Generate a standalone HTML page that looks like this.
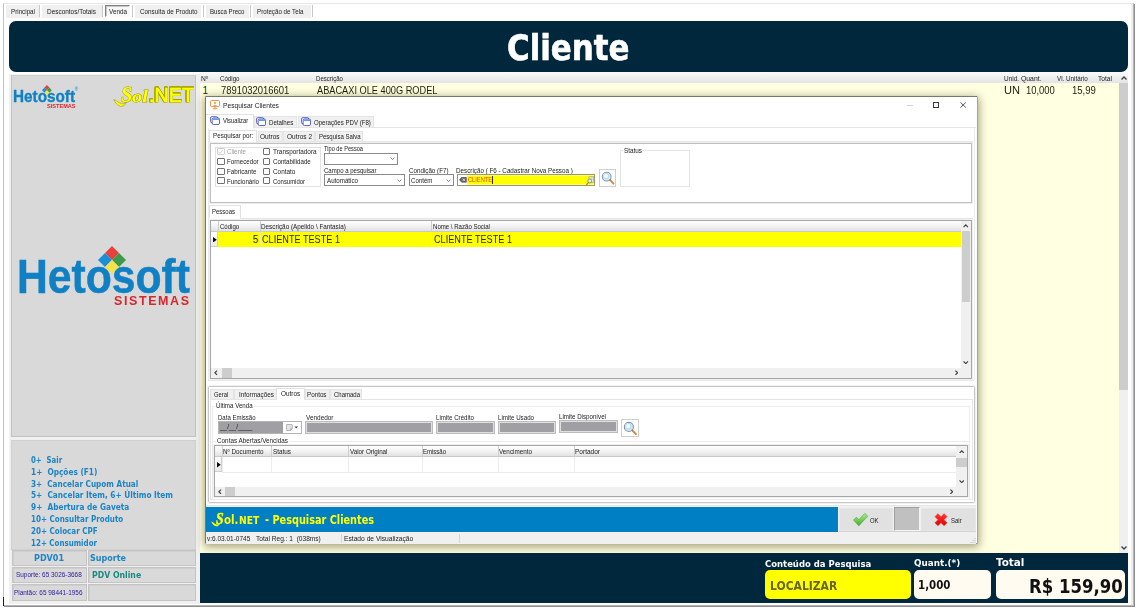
<!DOCTYPE html>
<html lang="pt-BR">
<head>
<meta charset="utf-8">
<title>Cliente</title>
<style>
html,body{margin:0;padding:0;background:#fff;}
body{width:1139px;height:611px;position:relative;overflow:hidden;font-family:"Liberation Sans","DejaVu Sans",sans-serif;font-size:6.5px;color:#1a1a1a;}
.a{position:absolute;box-sizing:border-box;}
.t{position:absolute;white-space:nowrap;line-height:10px;height:10px;transform-origin:0 50%;}
.tab{position:absolute;box-sizing:border-box;background:#f0f0f0;top:5px;height:13.4px;}
.sep{position:absolute;top:5px;height:12px;width:1px;background:#c9c9c9;}
.menu .t{font-family:"DejaVu Sans","Liberation Sans",sans-serif;font-weight:bold;color:#1b84c6;font-size:8.2px;white-space:pre;}
.cell{position:absolute;box-sizing:border-box;border:1px solid #c4c4c4;background:#d9d9d9;box-shadow:inset 1px 1px 0 #cfcfcf;}
.cb{position:absolute;box-sizing:border-box;width:7.2px;height:7.2px;border:1px solid #707070;border-radius:1px;background:#fff;}
.combo{position:absolute;box-sizing:border-box;border:1px solid #8a8a8a;background:#fff;}
.gf{position:absolute;box-sizing:border-box;border:1px solid #bcbcbc;background:#a0a0a4;box-shadow:inset 0 0 0 1px #e0e0e0;}
.gh{position:absolute;box-sizing:border-box;background:linear-gradient(#ffffff,#f4f4f4 45%,#e2e2e2);border-bottom:1px solid #c9c9c9;}
.lrow .t{font-size:10px;color:#1e1e10;}
.grow .t{font-size:10px;color:#2a2a00;}
.sol .t{color:#ffff00;-webkit-text-stroke:0.9px #9a9a00;paint-order:stroke fill;}
.bar .t{color:#ffff00;font-weight:bold;font-family:'DejaVu Sans','Liberation Sans',sans-serif;height:20px;line-height:20px;}
.vl{position:absolute;width:1px;background:#d8d8d8;}
.hl{position:absolute;height:1px;background:#d8d8d8;}
</style>
</head>
<body>
<!-- main window frame -->
<div class="a" id="frame" style="left:3px;top:3px;width:1131px;height:603px;border:1px solid #b4b4b4;border-top-color:#e6e6e6;border-left-color:#c2c2c2;background:#fff;box-shadow:1px 1px 0 #909090;"></div>

<div class="a" style="left:3px;top:597px;width:1px;height:9px;background:#101820;"></div>
<div class="a" style="left:1131px;top:4px;width:2px;height:601px;background:#eeeeee;"></div>
<!-- top tabs -->
<div id="toptabs">
<div class="tab" style="left:6px;width:33.5px;"></div><div class="t" style="transform:scaleX(0.962);left:10.5px;top:6.5px;">Principal</div>
<div class="sep" style="left:39.4px;"></div>
<div class="tab" style="left:42px;width:59.5px;"></div><div class="t" style="transform:scaleX(0.990);left:47px;top:6.5px;">Descontos/Totais</div>
<div class="sep" style="left:102px;"></div>
<div class="a" style="left:105px;top:5px;width:24.6px;height:12.2px;background:#f7f7f7;border:1px solid #808080;border-right-color:#fafafa;border-bottom-color:#fafafa;box-shadow:inset 1px 1px 0 #c8c8c8;"></div><div class="t" style="transform:scaleX(0.976);left:109px;top:7px;">Venda</div>
<div class="sep" style="left:132px;"></div>
<div class="tab" style="left:135px;width:65.5px;"></div><div class="t" style="transform:scaleX(0.970);left:139.5px;top:6.5px;">Consulta de Produto</div>
<div class="sep" style="left:203px;"></div>
<div class="tab" style="left:205.5px;width:43.5px;"></div><div class="t" style="transform:scaleX(0.936);left:209.5px;top:6.5px;">Busca Preco</div>
<div class="sep" style="left:250px;"></div>
<div class="tab" style="left:252.5px;width:58.5px;"></div><div class="t" style="transform:scaleX(0.955);left:257px;top:6.5px;">Proteção de Tela</div>
<div class="sep" style="left:312px;"></div>
</div>

<!-- header banner -->
<div class="a" id="banner" style="left:9px;top:21px;width:1118.5px;height:50.5px;background:#00273c;border-radius:7px;"></div>
<div class="t" id="title" style="transform:scaleX(0.964);left:507.2px;top:23px;height:50px;line-height:50px;font-family:'DejaVu Sans Condensed','DejaVu Sans','Liberation Sans',sans-serif;font-weight:bold;font-size:35.6px;color:#fff;-webkit-text-stroke:0.6px #fff;">Cliente</div>

<!-- left background -->
<div class="a" style="left:9.2px;top:74px;width:190.8px;height:529.6px;background:#f0f0f0;"></div>
<!-- logo panel -->
<div class="a" id="logopanel" style="left:10.8px;top:75px;width:185.6px;height:361.8px;background:#d9d9d9;border:1px solid #c2c2c2;border-top-color:#d0d0d0;"></div>
<!-- menu panel -->
<div class="a" id="menupanel" style="left:10.8px;top:439.5px;width:185.6px;height:110px;background:#d9d9d9;border:1px solid #d0d0d0;"></div>


<!-- small logo -->
<div class="t" id="slogo" style="transform:scaleX(0.899);left:13.3px;top:86.5px;height:20px;line-height:20px;font-weight:bold;font-size:17px;color:#1080c4;-webkit-text-stroke:0.35px #1080c4;">Hetosoft</div>
<svg class="a" style="left:42.4px;top:84.8px;" width="9.8" height="10.4" viewBox="0 0 28 28" preserveAspectRatio="none"><path d="M14 0l7 7-7 7-7-7z" fill="#e8403c"/><path d="M7 7l7 7-7 7-7-7z" fill="#1a8fd8"/><path d="M21 7l7 7-7 7-7-7z" fill="#3c9a4a"/><path d="M14 14l7 7-7 7-7-7z" fill="#f3e24a"/></svg>
<div class="t" style="transform:scaleX(0.932);left:46.6px;top:101.4px;font-weight:bold;font-size:6px;color:#d8262c;">SISTEMAS</div>
<div class="t" style="left:74.6px;top:87.5px;font-size:4.6px;font-weight:bold;color:#3c98d0;line-height:4px;height:4px;">®</div>
<!-- Sol.NET -->
<div class="sol">
<svg class="a" style="left:113px;top:96px;" width="14" height="12" viewBox="0 0 14 12"><path d="M0.800 3.600C3.200 4.200 5.500 6.800 8.200 7.600C10.200 8.200 12 7.600 13 6.200C12.600 8.800 10.400 10.600 7.600 10.300C4.600 10 2.200 6.600 0.800 3.600z" fill="#ffff00" stroke="#8a8a00" stroke-width="0.500"/></svg>
<div class="t" style="transform:scaleX(0.899);left:120.5px;top:83.3px;height:24px;line-height:24px;font-family:'Liberation Serif','DejaVu Serif',serif;font-style:italic;font-weight:bold;font-size:23px;">S</div>
<div class="t" style="transform:scaleX(1.209);left:132px;top:85.2px;height:24px;line-height:24px;font-family:'Liberation Serif','DejaVu Serif',serif;font-style:italic;font-weight:bold;font-size:17px;">ol</div>
<div class="t" style="transform:scaleX(0.954);left:149.2px;top:83px;height:24px;line-height:24px;font-size:20.800px;-webkit-text-stroke:0.6px #ffff00;filter:drop-shadow(0.3px 0 0 #a4a400) drop-shadow(-0.3px 0 0 #a4a400) drop-shadow(0 0.3px 0 #a4a400) drop-shadow(0 -0.3px 0 #a4a400);">.NET</div>
</div>
<!-- big logo -->
<div class="t" id="blogo" style="transform:scaleX(0.898);left:17.2px;top:251.8px;height:50px;line-height:50px;font-weight:bold;font-size:47.5px;color:#1080c4;-webkit-text-stroke:0.5px #1080c4;">Hetosoft</div>
<svg class="a" style="left:97.5px;top:246px;" width="28" height="28" viewBox="0 0 28 28"><path d="M14 0l7 7-7 7-7-7z" fill="#e8403c"/><path d="M7 7l7 7-7 7-7-7z" fill="#1a8fd8"/><path d="M21 7l7 7-7 7-7-7z" fill="#3c9a4a"/><path d="M14 14l7 7-7 7-7-7z" fill="#f3e24a"/></svg>
<div class="t" id="bsis" style="transform:scaleX(0.999);left:113.5px;top:295.5px;font-weight:bold;font-size:12.5px;color:#d8262c;letter-spacing:1.6px;">SISTEMAS</div>
<!-- menu -->
<div class="menu">
<div class="t" style="transform:scaleX(0.851);left:30.6px;top:455.1px;">0+  Sair</div>
<div class="t" style="transform:scaleX(0.901);left:30.6px;top:466.9px;">1+  Opções (F1)</div>
<div class="t" style="transform:scaleX(0.891);left:30.6px;top:478.6px;">3+  Cancelar Cupom Atual</div>
<div class="t" style="transform:scaleX(0.899);left:30.6px;top:490.4px;">5+  Cancelar Item, 6+ Último Item</div>
<div class="t" style="transform:scaleX(0.901);left:30.6px;top:502.2px;">9+  Abertura de Gaveta</div>
<div class="t" style="transform:scaleX(0.876);left:30.6px;top:513.9px;">10+ Consultar Produto</div>
<div class="t" style="transform:scaleX(0.877);left:30.6px;top:525.7px;">20+ Colocar CPF</div>
<div class="t" style="transform:scaleX(0.867);left:30.6px;top:537.5px;">12+ Consumidor</div>
</div>
<!-- bottom-left cells -->
<div class="cell" style="left:11.5px;top:549.5px;width:75px;height:16.5px;"></div>
<div class="cell" style="left:88px;top:549.5px;width:107.5px;height:16.5px;"></div>
<div class="cell" style="left:11.5px;top:567px;width:75px;height:16px;"></div>
<div class="cell" style="left:88px;top:567px;width:107.5px;height:16px;"></div>
<div class="cell" style="left:11.5px;top:584px;width:75px;height:17.3px;"></div>
<div class="cell" style="left:88px;top:584px;width:107.5px;height:17.3px;"></div>
<div class="t" id="pdv01" style="transform:scaleX(0.878);left:34px;top:552.5px;font-family:'DejaVu Sans','Liberation Sans',sans-serif;font-weight:bold;font-size:9.2px;color:#1b84c6;">PDV01</div>
<div class="t" id="sup" style="transform:scaleX(0.874);left:90px;top:552.5px;font-family:'DejaVu Sans','Liberation Sans',sans-serif;font-weight:bold;font-size:9.2px;color:#1b84c6;">Suporte</div>
<div class="t" id="sup2" style="transform:scaleX(1.006);left:15.8px;top:570px;font-size:6.4px;color:#2a1a9a;">Suporte: 65 3026-3668</div>
<div class="t" id="pdvon" style="transform:scaleX(0.905);left:92.2px;top:570px;font-family:'DejaVu Sans','Liberation Sans',sans-serif;font-weight:bold;font-size:8.6px;color:#1a8a80;">PDV Online</div>
<div class="t" id="plant" style="transform:scaleX(1.004);left:14px;top:587.5px;font-size:6.4px;color:#2a1a9a;">Plantão: 65 98441-1956</div>

<!-- list area -->
<div class="a" id="list" style="left:200px;top:83px;width:919px;height:470px;background:#ffffe1;"></div>
<div class="gh" id="listhead" style="left:200px;top:72px;width:928px;height:11px;border-bottom:none;background:linear-gradient(#fbfbfb,#e4e4e4);"></div>
<!-- list scrollbar -->
<div class="a" style="left:1119px;top:83px;width:9px;height:470px;background:#f0f0f0;"></div>
<div class="a" style="left:1119px;top:83px;width:9px;height:306.8px;background:#cdcdcd;"></div>


<!-- list header labels -->
<div class="t" style="transform:scaleX(1.064);left:201px;top:73.5px;font-size:6.3px;">Nº</div>
<div class="t" style="transform:scaleX(0.977);left:219.5px;top:73.5px;font-size:6.3px;">Código</div>
<div class="t" style="transform:scaleX(0.964);left:316.3px;top:73.5px;font-size:6.3px;">Descrição</div>
<div class="t" style="transform:scaleX(1.020);left:1004px;top:73.5px;font-size:6.3px;">Unid.</div>
<div class="t" style="transform:scaleX(1.084);left:1020.8px;top:73.5px;font-size:6.3px;">Quant.</div>
<div class="t" style="transform:scaleX(0.994);left:1057.3px;top:73.5px;font-size:6.3px;">Vl. Unitário</div>
<div class="t" style="transform:scaleX(1.052);left:1098px;top:73.5px;font-size:6.3px;">Total</div>
<svg class="a" style="left:1120.5px;top:76px;" width="6" height="4" viewBox="0 0 6 4"><path d="M0.5 3.5L3 1l2.5 2.5" fill="none" stroke="#404040" stroke-width="1.35"/></svg>
<svg class="a" style="left:1120.5px;top:546px;" width="6" height="4" viewBox="0 0 6 4"><path d="M0.5 0.5L3 3l2.5-2.5" fill="none" stroke="#404040" stroke-width="1.35"/></svg>
<!-- list row -->
<div class="lrow">
<div class="t" style="left:202.6px;top:85.8px;">1</div>
<div class="t" style="transform:scaleX(0.945);left:220.7px;top:85.8px;">7891032016601</div>
<div class="t" style="transform:scaleX(0.922);left:317px;top:85.8px;">ABACAXI OLE 400G RODEL</div>
<div class="t" style="transform:scaleX(1.107);left:1004px;top:85.8px;">UN</div>
<div class="t" style="transform:scaleX(0.941);left:1025.8px;top:85.8px;">10,000</div>
<div class="t" style="transform:scaleX(0.955);left:1071.5px;top:85.8px;">15,99</div>
</div>


<!-- ================= dialog ================= -->
<div class="a" id="dlg" style="left:205.3px;top:96.3px;width:772.6px;height:448px;background:#fff;border:1px solid #77776a;border-right-color:#a4a494;border-bottom-color:#a4a494;border-radius:1.5px;box-shadow:0 2px 8px 1px rgba(70,70,30,0.5);"></div>
<!-- title bar -->
<svg class="a" style="left:210px;top:100px;" width="10" height="9.5" viewBox="0 0 20 19"><rect x="1" y="1" width="18" height="12" rx="2" fill="#fff" stroke="#f0873a" stroke-width="1.8"/><circle cx="10" cy="6" r="2.2" fill="#f5a020"/><path d="M6 11.5 Q10 7 14 11.5z" fill="#f0873a"/><path d="M10 13v3M5.5 17.5h9" stroke="#f0873a" stroke-width="2" fill="none"/></svg>
<div class="t" style="transform:scaleX(0.861);left:222.8px;top:100.7px;font-size:7.8px;color:#222;">Pesquisar Clientes</div>
<div class="a" style="left:907px;top:105px;width:6px;height:1px;background:#d0d0d0;"></div>
<div class="a" style="left:933px;top:102px;width:6.4px;height:6px;border:1px solid #3a3a3a;"></div>
<svg class="a" style="left:960px;top:102px;" width="6.3" height="6" viewBox="0 0 7 7" preserveAspectRatio="none"><path d="M0.5 0.5l6 6M6.5 0.5l-6 6" stroke="#333" stroke-width="0.9" fill="none"/></svg>
<!-- tab strip 1 -->
<div class="a" style="left:206.3px;top:127px;width:769.5px;height:1px;background:#e6e6e6;"></div>
<div class="a" style="left:205.8px;top:114px;width:48px;height:13.5px;background:#fff;border:1px solid #e2e2e2;border-bottom:none;border-left:none;"></div>
<div class="a" style="left:254px;top:116px;width:43px;height:11px;background:#f0f0f0;border:1px solid #e4e4e4;border-bottom:none;"></div>
<div class="a" style="left:297.5px;top:116px;width:76px;height:11px;background:#f0f0f0;border:1px solid #e4e4e4;border-bottom:none;"></div>
<svg class="a" style="left:210.2px;top:116.1px;" width="10" height="9" viewBox="0 0 20 18"><rect x="1" y="1.2" width="14.5" height="12.5" rx="2.8" fill="#eef0ff" stroke="#4444b8" stroke-width="1.5"/><rect x="4.3" y="4" width="14.700" height="13" rx="2.600" fill="#fff" stroke="#3d3db5" stroke-width="1.600"/><rect x="5.300" y="5" width="12.700" height="3.200" rx="0.800" fill="#5aa0ea"/></svg>
<svg class="a" style="left:256px;top:117px;" width="10" height="9" viewBox="0 0 20 18"><rect x="1" y="1.2" width="14.5" height="12.5" rx="2.8" fill="#eef0ff" stroke="#4444b8" stroke-width="1.5"/><rect x="4.3" y="4" width="14.700" height="13" rx="2.600" fill="#fff" stroke="#3d3db5" stroke-width="1.600"/><rect x="5.300" y="5" width="12.700" height="3.200" rx="0.800" fill="#5aa0ea"/></svg>
<svg class="a" style="left:301px;top:117px;" width="10" height="9" viewBox="0 0 20 18"><rect x="1" y="1.2" width="14.5" height="12.5" rx="2.8" fill="#eef0ff" stroke="#4444b8" stroke-width="1.5"/><rect x="4.3" y="4" width="14.700" height="13" rx="2.600" fill="#fff" stroke="#3d3db5" stroke-width="1.600"/><rect x="5.300" y="5" width="12.700" height="3.200" rx="0.800" fill="#5aa0ea"/></svg>
<div class="t" style="transform:scaleX(0.898);left:222.9px;top:115.9px;">Visualizar</div>
<div class="t" style="transform:scaleX(0.947);left:269px;top:117.6px;">Detalhes</div>
<div class="t" style="transform:scaleX(0.936);left:313.7px;top:117.6px;">Operações PDV (F8)</div>
<!-- page 1 pane -->
<div class="a" style="left:208.3px;top:128px;width:1px;height:252px;background:#ececec;"></div>
<div class="a" style="left:208.3px;top:379.6px;width:766px;height:1px;background:#e8e8e8;"></div>
<div class="a" style="left:974px;top:128px;width:1px;height:252px;background:#ececec;"></div>
<div class="a" style="left:208px;top:386.4px;width:767px;height:116.5px;border:1px solid #c6c6c6;border-radius:1.5px;box-shadow:0 0 0 1px #f1f1f1;"></div>
<div class="a" style="left:206.3px;top:504.6px;width:770px;height:1px;background:#e6e6e6;"></div>
<!-- tab strip 2 -->
<div class="a" style="left:208.6px;top:129.5px;width:48.8px;height:13px;background:#fff;border:1px solid #e0e0e0;border-bottom:none;"></div>
<div class="a" style="left:257.6px;top:131.2px;width:25.6px;height:10.3px;background:#f0f0f0;border:1px solid #e4e4e4;border-bottom:none;"></div>
<div class="a" style="left:283.3px;top:131.2px;width:31.4px;height:10.3px;background:#f0f0f0;border:1px solid #e4e4e4;border-bottom:none;"></div>
<div class="a" style="left:314.8px;top:131.2px;width:47.8px;height:10.3px;background:#f0f0f0;border:1px solid #e4e4e4;border-bottom:none;"></div>
<div class="a" style="left:257.4px;top:141.3px;width:716px;height:1px;background:#e6e6e6;"></div>
<div class="t" style="transform:scaleX(0.964);left:212.6px;top:130.8px;">Pesquisar por:</div>
<div class="t" style="transform:scaleX(1.004);left:260px;top:131.9px;">Outros</div>
<div class="t" style="transform:scaleX(1.003);left:286.7px;top:131.9px;">Outros 2</div>
<div class="t" style="transform:scaleX(0.926);left:318.5px;top:131.9px;">Pesquisa Salva</div>
<!-- pane 2 -->
<div class="a" id="pane2" style="left:210.2px;top:143px;width:762px;height:59.5px;background:#fff;border:1px solid #c0c0c0;box-shadow:0 0 0 1px #ededed;"></div>
<!-- checkbox group -->
<div class="a" style="left:214.8px;top:146.6px;width:106px;height:40.6px;border:1px solid #e2e2e2;"></div>
<div class="cb" style="left:217.4px;top:148.0px;border-color:#cfcfcf;"></div><div class="t" style="transform:scaleX(0.939);left:226.7px;top:147.3px;color:#9a9a9a;">Cliente</div>
<div class="cb" style="left:263.3px;top:148.0px;"></div><div class="t" style="transform:scaleX(0.986);left:272.7px;top:147.3px;">Transportadora</div>
<div class="cb" style="left:217.4px;top:157.7px;"></div><div class="t" style="transform:scaleX(0.953);left:226.7px;top:157.0px;">Fornecedor</div>
<div class="cb" style="left:263.3px;top:157.7px;"></div><div class="t" style="transform:scaleX(0.951);left:272.7px;top:157.0px;">Contabilidade</div>
<div class="cb" style="left:217.4px;top:167.5px;"></div><div class="t" style="transform:scaleX(0.957);left:226.7px;top:166.8px;">Fabricante</div>
<div class="cb" style="left:263.3px;top:167.5px;"></div><div class="t" style="transform:scaleX(0.979);left:272.7px;top:166.8px;">Contato</div>
<div class="cb" style="left:217.4px;top:177.3px;"></div><div class="t" style="transform:scaleX(0.942);left:226.7px;top:176.6px;">Funcionário</div>
<div class="cb" style="left:263.3px;top:177.3px;"></div><div class="t" style="transform:scaleX(0.913);left:272.7px;top:176.6px;">Consumidor</div>
<svg class="a" style="left:218.4px;top:149px;" width="5.4" height="5.4" viewBox="0 0 6 6"><path d="M0.8 3.2l1.6 1.6L5.4 1.2" stroke="#c4c4c4" stroke-width="0.9" fill="none"/></svg>


<!-- pane2 fields -->
<div class="t" style="transform:scaleX(0.868);left:324.3px;top:144.2px;">Tipo de Pessoa</div>
<div class="combo" style="left:324px;top:152.5px;width:73.5px;height:12px;"></div>
<svg class="a" style="left:389.5px;top:157.2px;" width="5" height="3.2" viewBox="0 0 10 6"><path d="M1 1l4 4 4-4" fill="none" stroke="#444" stroke-width="1.3"/></svg>
<div class="t" style="transform:scaleX(0.931);left:324.3px;top:165.8px;">Campo a pesquisar</div>
<div class="combo" style="left:324px;top:174.2px;width:81px;height:12.2px;"></div>
<div class="t" style="transform:scaleX(0.953);left:326.5px;top:175.6px;">Automático</div>
<svg class="a" style="left:397px;top:178.8px;" width="5" height="3.2" viewBox="0 0 10 6"><path d="M1 1l4 4 4-4" fill="none" stroke="#444" stroke-width="1.3"/></svg>
<div class="t" style="transform:scaleX(0.959);left:408.8px;top:165.8px;">Condição (F7)</div>
<div class="combo" style="left:409px;top:174.2px;width:44.5px;height:12.2px;"></div>
<div class="t" style="transform:scaleX(0.944);left:411.3px;top:175.6px;">Contém</div>
<svg class="a" style="left:445.5px;top:178.8px;" width="5" height="3.2" viewBox="0 0 10 6"><path d="M1 1l4 4 4-4" fill="none" stroke="#444" stroke-width="1.3"/></svg>
<div class="t" style="transform:scaleX(0.965);left:456.3px;top:165.8px;">Descrição ( F6 - Cadastrar Nova Pessoa )</div>
<div class="a" style="left:456.8px;top:174.2px;width:138.5px;height:11.8px;background:#ffff00;border:1px solid #9a9a70;box-shadow:inset 0 0 0 0.5px #ffffc0;"></div>
<div class="a" style="left:457.8px;top:175.2px;width:9.6px;height:9.8px;background:#fff;"></div>
<svg class="a" style="left:458.8px;top:177.3px;" width="7.8" height="5.6" viewBox="0 0 15 11"><path d="M5 0.7H14.3V10.3H5L0.8 5.5z" fill="#6a6a6a" stroke="#333" stroke-width="1"/><path d="M7.3 3.3l4.2 4.4M11.5 3.3l-4.2 4.4" stroke="#fff" stroke-width="1.5"/></svg>
<div class="t" style="transform:scaleX(0.874);left:467.5px;top:175.4px;color:#e6451e;">CLIENTE</div>
<div class="a" style="left:492.4px;top:176.3px;width:1px;height:7.5px;background:#333;"></div>
<svg class="a" style="left:585.5px;top:175.5px;" width="8.5" height="9.5" viewBox="0 0 17 19"><rect x="6" y="1.5" width="9.5" height="11" fill="#f4f4d8" stroke="#8a8a8a" stroke-width="1"/><path d="M7.5 4h6M7.5 6.5h6" stroke="#9a9ac8" stroke-width="1"/><circle cx="7.5" cy="10" r="4" fill="#dfefff" fill-opacity="0.8" stroke="#6f7f9a" stroke-width="1.5"/><path d="M4.8 13l-3.6 4.6" stroke="#b07030" stroke-width="2.2" stroke-linecap="round"/></svg>
<div class="a" style="left:598.8px;top:168.8px;width:17.5px;height:18px;background:#fff;border:1px solid #cfcfcf;"></div>
<svg class="a" style="left:600.5px;top:170.5px;" width="14" height="14" viewBox="0 0 32 32"><circle cx="13" cy="13" r="10" fill="#d4eaf8" stroke="#8496a8" stroke-width="2.4"/><circle cx="11.5" cy="11.5" r="6" fill="#f4fbff" stroke="#bcdcf0" stroke-width="2.5"/><path d="M20.5 20.5l8 8.5" stroke="#d8862e" stroke-width="4.2" stroke-linecap="round"/><path d="M19.5 19.5l2.5 2.5" stroke="#8a8a8a" stroke-width="3"/></svg>
<div class="a" style="left:620px;top:150px;width:70px;height:36.5px;border:1px solid #e4e4e4;"></div>
<div class="t" style="transform:scaleX(0.979);left:623.3px;top:145.6px;background:#fff;padding:0 1px;">Status</div>


<!-- Pessoas tab + grid 1 -->
<div class="a" style="left:208.6px;top:205.2px;width:32px;height:13px;background:#fff;border:1px solid #e2e2e2;border-bottom:none;"></div>
<div class="a" style="left:240.4px;top:217.5px;width:733px;height:1px;background:#e6e6e6;"></div>
<div class="t" style="transform:scaleX(0.922);left:212.2px;top:206.7px;">Pessoas</div>
<div class="a" id="grid1" style="left:210.2px;top:220.2px;width:762px;height:158.5px;background:#fff;border:1px solid #a6a6a6;box-shadow:0 0 0 1px #efefef;"></div>
<div class="gh" style="left:211.2px;top:221.2px;width:749.8px;height:10.6px;"></div>
<div class="vl" style="left:218px;top:221.2px;height:10.6px;background:#cfcfcf;"></div>
<div class="vl" style="left:259.8px;top:221.2px;height:10.6px;background:#cfcfcf;"></div>
<div class="vl" style="left:431px;top:221.2px;height:10.6px;background:#cfcfcf;"></div>
<div class="t" style="transform:scaleX(0.932);left:219.5px;top:221.6px;">Código</div>
<div class="t" style="transform:scaleX(0.974);left:261px;top:221.6px;">Descrição (Apelido \ Fantasia)</div>
<div class="t" style="transform:scaleX(0.933);left:432.5px;top:221.6px;">Nome \ Razão Social</div>
<div class="a" style="left:211.2px;top:231.6px;width:7px;height:15px;background:linear-gradient(#fff,#e9e9e9);border-right:1px solid #cfcfcf;border-bottom:1px solid #cfcfcf;"></div>
<div class="a" style="left:218.3px;top:231.6px;width:742.7px;height:15px;background:#ffff00;"></div>
<div class="vl" style="left:259.8px;top:231.6px;height:14.6px;background:#f4f490;"></div>
<div class="vl" style="left:431px;top:231.6px;height:14.6px;background:#f4f490;"></div>
<svg class="a" style="left:213.2px;top:236.6px;" width="3.8" height="5.6" viewBox="0 0 4 6"><path d="M0 0L4 3L0 6z" fill="#000"/></svg>
<div class="grow">
<div class="t" style="left:252.8px;top:235px;">5</div>
<div class="t" style="transform:scaleX(0.913);left:262.2px;top:235px;">CLIENTE TESTE 1</div>
<div class="t" style="transform:scaleX(0.913);left:433.8px;top:235px;">CLIENTE TESTE 1</div>
</div>
<!-- grid1 scrollbars -->
<div class="a" style="left:961px;top:221.2px;width:10.2px;height:146.5px;background:#f0f0f0;"></div>
<div class="a" style="left:962px;top:231.3px;width:8.2px;height:71px;background:#cdcdcd;"></div>
<svg class="a" style="left:963.2px;top:224.4px;" width="5.5" height="3.5" viewBox="0 0 6 4"><path d="M0.5 3.5L3 1l2.5 2.5" fill="none" stroke="#404040" stroke-width="1.35"/></svg>
<svg class="a" style="left:963.2px;top:360.8px;" width="5.5" height="3.5" viewBox="0 0 6 4"><path d="M0.5 0.5L3 3l2.5-2.5" fill="none" stroke="#404040" stroke-width="1.35"/></svg>
<div class="a" style="left:211.2px;top:367.7px;width:760px;height:10px;background:#f0f0f0;"></div>
<div class="a" style="left:221.5px;top:367.7px;width:10px;height:10px;background:#cdcdcd;"></div>
<svg class="a" style="left:214px;top:370px;" width="3.5" height="5.5" viewBox="0 0 4 6"><path d="M3.5 0.5L1 3l2.5 2.5" fill="none" stroke="#404040" stroke-width="1.35"/></svg>
<svg class="a" style="left:954.5px;top:370px;" width="3.5" height="5.5" viewBox="0 0 4 6"><path d="M0.5 0.5L3 3L0.5 5.5" fill="none" stroke="#404040" stroke-width="1.35"/></svg>


<!-- bottom tabs -->
<div class="a" style="left:210.3px;top:389.2px;width:23.8px;height:10.5px;background:#f0f0f0;border:1px solid #e4e4e4;border-bottom:none;"></div>
<div class="a" style="left:234px;top:389.2px;width:42.5px;height:10.5px;background:#f0f0f0;border:1px solid #e4e4e4;border-bottom:none;"></div>
<div class="a" style="left:305px;top:389.2px;width:25px;height:10.5px;background:#f0f0f0;border:1px solid #e4e4e4;border-bottom:none;"></div>
<div class="a" style="left:330px;top:389.2px;width:32.3px;height:10.5px;background:#f0f0f0;border:1px solid #e4e4e4;border-bottom:none;"></div>
<div class="a" style="left:276.4px;top:387.6px;width:28.6px;height:12.8px;background:#fff;border:1px solid #e0e0e0;border-bottom:none;"></div>
<div class="t" style="transform:scaleX(0.899);left:213.7px;top:389.6px;">Geral</div>
<div class="t" style="transform:scaleX(0.975);left:238.5px;top:389.6px;">Informações</div>
<div class="t" style="transform:scaleX(0.984);left:281px;top:388.5px;">Outros</div>
<div class="t" style="transform:scaleX(0.963);left:307px;top:389.7px;">Pontos</div>
<div class="t" style="transform:scaleX(0.922);left:334px;top:389.7px;">Chamada</div>
<!-- pane 3 -->
<div class="a" id="pane3" style="left:210.2px;top:399.4px;width:762.4px;height:101px;border:1px solid #e4e4e4;"></div>
<div class="a" style="left:277.4px;top:399.4px;width:26.6px;height:1px;background:#fff;"></div>
<div class="a" style="left:211.8px;top:406px;width:758px;height:36px;border:1px solid #ececec;border-bottom:none;"></div>
<div class="t" style="transform:scaleX(0.949);left:214.9px;top:401.1px;background:#fff;padding:0 1px;">Última Venda</div>
<div class="a" style="left:211.8px;top:441px;width:758px;height:58.6px;border:1px solid #ebebeb;"></div>
<div class="t" style="transform:scaleX(0.977);left:216.1px;top:435.7px;background:#fff;padding:0 1px;">Contas Abertas/Vencidas</div>
<div class="t" style="transform:scaleX(0.927);left:217.7px;top:413.2px;">Data Emissão</div>
<div class="a" style="left:217.9px;top:421px;width:84.4px;height:13px;background:#fff;border:1px solid #b4b4b4;"></div>
<div class="a" style="left:218.9px;top:422px;width:64.3px;height:11px;background:#a0a0a4;"></div>
<div class="t" style="transform:scaleX(0.809);left:220.4px;top:422px;font-size:8px;color:#1a1a1a;">__/__/____</div>
<svg class="a" style="left:286px;top:424.2px;" width="12.5" height="7" viewBox="0 0 25 14"><path d="M2 1h9q1.500 0 1.500 1.500v7l-3.500 3.500h-7q-1.500 0-1.500-1.500v-9q0-1.500 1.500-1.500z" fill="#e4e4e8" stroke="#8c8c94" stroke-width="1.300"/><path d="M12.500 9.500h-3.500v3.500" fill="none" stroke="#8c8c94" stroke-width="1"/><path d="M17 5h7l-3.500 4z" fill="#1c3c80"/></svg>
<div class="t" style="transform:scaleX(0.988);left:305.5px;top:413.2px;">Vendedor</div>
<div class="gf" style="left:305.3px;top:421px;width:127.7px;height:13px;"></div>
<div class="t" style="transform:scaleX(0.947);left:435.8px;top:413.2px;">Limite Crédito</div>
<div class="gf" style="left:436px;top:421px;width:59px;height:13px;"></div>
<div class="t" style="transform:scaleX(0.949);left:497.7px;top:413.2px;">Limite Usado</div>
<div class="gf" style="left:497.7px;top:421px;width:58.6px;height:13px;"></div>
<div class="t" style="transform:scaleX(0.949);left:559px;top:412.2px;">Limite Disponível</div>
<div class="gf" style="left:559px;top:420px;width:59px;height:13px;"></div>
<div class="a" style="left:620.9px;top:419px;width:18px;height:17.6px;background:#fff;border:1px solid #cfcfcf;"></div>
<svg class="a" style="left:622.6px;top:420.6px;" width="14.5" height="14.5" viewBox="0 0 32 32"><circle cx="13" cy="13" r="10" fill="#d4eaf8" stroke="#8496a8" stroke-width="2.4"/><circle cx="11.5" cy="11.5" r="6" fill="#f4fbff" stroke="#bcdcf0" stroke-width="2.5"/><path d="M20.5 20.5l8 8.5" stroke="#d8862e" stroke-width="4.2" stroke-linecap="round"/><path d="M19.5 19.5l2.5 2.5" stroke="#8a8a8a" stroke-width="3"/></svg>
<!-- grid 2 -->
<div class="a" id="grid2" style="left:214px;top:445.3px;width:753.5px;height:52px;background:#fff;border:1px solid #a6a6a6;box-shadow:0 0 0 1px #f1f1f1;"></div>
<div class="gh" style="left:215px;top:446.3px;width:741px;height:11px;"></div>
<div class="t" style="transform:scaleX(0.964);left:222.9px;top:447px;">Nº Documento</div>
<div class="t" style="transform:scaleX(0.976);left:272.5px;top:446.8px;">Status</div>
<div class="t" style="transform:scaleX(0.964);left:349.5px;top:446.8px;">Valor Original</div>
<div class="t" style="transform:scaleX(0.922);left:423.2px;top:446.8px;">Emissão</div>
<div class="t" style="transform:scaleX(0.971);left:499.3px;top:446.8px;">Vencimento</div>
<div class="t" style="transform:scaleX(1.003);left:575.2px;top:446.8px;">Portador</div>
<div class="a" style="left:215px;top:457.3px;width:7px;height:15px;background:linear-gradient(#fff,#e9e9e9);border-right:1px solid #cfcfcf;border-bottom:1px solid #cfcfcf;"></div>
<svg class="a" style="left:216.8px;top:462px;" width="3.8" height="5.6" viewBox="0 0 4 6"><path d="M0 0L4 3L0 6z" fill="#000"/></svg>
<div class="hl" style="left:222px;top:472px;width:734px;background:#ececec;"></div>
<div class="vl" style="left:222px;top:446.3px;height:11px;background:#cfcfcf;"></div><div class="vl" style="left:222px;top:457.3px;height:15px;background:#ececec;"></div>
<div class="vl" style="left:271.3px;top:446.3px;height:11px;background:#cfcfcf;"></div><div class="vl" style="left:271.3px;top:457.3px;height:15px;background:#ececec;"></div>
<div class="vl" style="left:348.2px;top:446.3px;height:11px;background:#cfcfcf;"></div><div class="vl" style="left:348.2px;top:457.3px;height:15px;background:#ececec;"></div>
<div class="vl" style="left:422.2px;top:446.3px;height:11px;background:#cfcfcf;"></div><div class="vl" style="left:422.2px;top:457.3px;height:15px;background:#ececec;"></div>
<div class="vl" style="left:498.3px;top:446.3px;height:11px;background:#cfcfcf;"></div><div class="vl" style="left:498.3px;top:457.3px;height:15px;background:#ececec;"></div>
<div class="vl" style="left:574.3px;top:446.3px;height:11px;background:#cfcfcf;"></div><div class="vl" style="left:574.3px;top:457.3px;height:15px;background:#ececec;"></div>
<div class="a" style="left:956px;top:446.3px;width:10.5px;height:40.4px;background:#f0f0f0;"></div>
<div class="a" style="left:956px;top:457.5px;width:10.5px;height:9.5px;background:#cdcdcd;"></div>
<svg class="a" style="left:958.5px;top:449.5px;" width="5.5" height="3.5" viewBox="0 0 6 4"><path d="M0.5 3.5L3 1l2.5 2.5" fill="none" stroke="#404040" stroke-width="1.35"/></svg>
<svg class="a" style="left:958.5px;top:479.5px;" width="5.5" height="3.5" viewBox="0 0 6 4"><path d="M0.5 0.5L3 3l2.5-2.5" fill="none" stroke="#404040" stroke-width="1.35"/></svg>
<div class="a" style="left:215px;top:486.7px;width:751.5px;height:9.6px;background:#f0f0f0;"></div>
<div class="a" style="left:224.6px;top:486.7px;width:10px;height:9.6px;background:#cdcdcd;"></div>
<svg class="a" style="left:218px;top:488.8px;" width="3.5" height="5.5" viewBox="0 0 4 6"><path d="M3.5 0.5L1 3l2.5 2.5" fill="none" stroke="#404040" stroke-width="1.35"/></svg>
<svg class="a" style="left:949.5px;top:488.8px;" width="3.5" height="5.5" viewBox="0 0 4 6"><path d="M0.5 0.5L3 3L0.5 5.5" fill="none" stroke="#404040" stroke-width="1.35"/></svg>


<!-- blue bar + buttons -->
<div class="a" style="left:206.3px;top:505.8px;width:770px;height:38px;background:#f0f0f0;"></div>
<div class="a" id="bluebar" style="left:206.3px;top:507.3px;width:631.5px;height:24.7px;background:#007fc5;"></div>
<svg class="a" style="left:209.8px;top:518.8px;" width="11" height="8.5" viewBox="0 0 14 12"><path d="M0.800 3.600C3.200 4.200 5.500 6.800 8.200 7.600C10.200 8.200 12 7.600 13 6.200C12.600 8.800 10.400 10.600 7.600 10.300C4.600 10 2.200 6.600 0.800 3.600z" fill="#ffff00"/></svg>
<div class="bar">
<div class="t" style="transform:scaleX(0.827);left:215.800px;top:508.800px;font-family:'Liberation Serif','DejaVu Serif',serif;font-style:italic;font-weight:bold;font-size:16.5px;-webkit-text-stroke:0.5px #ffff00;">S</div>
<div class="t" style="transform:scaleX(0.894);left:223.500px;top:510.300px;font-size:11.500px;">ol.</div>
<div class="t" style="transform:scaleX(0.874);left:239.200px;top:510.400px;font-size:10.500px;">NET</div>
<div class="t" style="transform:scaleX(0.846);left:264.800px;top:509.600px;font-size:11.500px;">- Pesquisar Clientes</div>
</div>
<div class="a" style="left:838.8px;top:508.2px;width:54px;height:23.2px;background:#e1e1e1;border:1px solid #e6e6e6;"></div>
<svg class="a" style="left:853.2px;top:512.6px;" width="15.2" height="13.3" viewBox="0 0 26 23"><defs><linearGradient id="gck" x1="0" y1="0" x2="0" y2="1"><stop offset="0" stop-color="#b4ec8a"/><stop offset="1" stop-color="#3fae2a"/></linearGradient></defs><path d="M0.800 12.300L5.800 7.200l4.200 4.300L20.300 0.800l4.900 4.600L10 22.200z" fill="url(#gck)" stroke="#4aa83a" stroke-width="1.200" stroke-linejoin="round"/></svg>
<div class="t" style="transform:scaleX(0.914);left:869.7px;top:515.6px;">OK</div>
<div class="a" style="left:894px;top:507px;width:26px;height:24.2px;background:#c0c0c0;border:1px solid #a0a0a0;border-right-color:#f4f4f4;border-bottom-color:#f4f4f4;"></div>
<div class="a" style="left:921.4px;top:508.2px;width:55px;height:23.2px;background:#e1e1e1;border:1px solid #e6e6e6;"></div>
<svg class="a" style="left:933.8px;top:512.8px;" width="14" height="13.4" viewBox="0 0 24 24"><defs><linearGradient id="gx" x1="0" y1="0" x2="0" y2="1"><stop offset="0" stop-color="#ff3a30"/><stop offset="1" stop-color="#e00000"/></linearGradient></defs><path d="M1.200 6.500L6.500 1.200L12 6.700L17.500 1.200L22.800 6.500L17.300 12L22.800 17.500L17.500 22.800L12 17.300L6.500 22.800L1.200 17.500L6.700 12z" fill="url(#gx)" stroke="#e82a20" stroke-width="1" stroke-linejoin="round"/></svg>
<div class="t" style="transform:scaleX(0.925);left:951px;top:515.6px;">Sair</div>
<div class="a" style="left:838.8px;top:531px;width:137.5px;height:1px;background:#d2d2d2;"></div>
<!-- dialog status bar -->

<div class="t" style="transform:scaleX(0.927);left:206.8px;top:533.6px;font-size:7px;white-space:pre;">v:6.03.01-0745</div>
<div class="t" style="transform:scaleX(0.941);left:256.1px;top:533.6px;font-size:7px;white-space:pre;">Total Reg.: 1  (038ms)</div>
<div class="t" style="transform:scaleX(0.954);left:343.9px;top:533.6px;font-size:7px;white-space:pre;">Estado de Visualização</div>
<div class="vl" style="left:340.9px;top:533.5px;height:9px;background:#d6d6d6;"></div>
<div class="vl" style="left:458.8px;top:533.5px;height:9px;background:#d6d6d6;"></div>
<svg class="a" style="left:970px;top:537px;" width="6" height="6" viewBox="0 0 6 6"><path d="M4.500 1h1v1h-1zM4.500 3h1v1h-1zM2.500 3h1v1h-1zM4.500 5h1v1h-1zM2.500 5h1v1h-1zM0.500 5h1v1h-1z" fill="#bdbdbd"/></svg>

<!-- bottom dark strip -->
<div class="a" id="bottom" style="left:200.3px;top:553.3px;width:927.7px;height:50.2px;background:#00273c;"></div>


<!-- bottom strip contents -->
<div class="t" id="lblc" style="transform:scaleX(0.904);left:764.5px;top:559px;font-family:'DejaVu Sans','Liberation Sans',sans-serif;font-weight:bold;font-size:9.4px;color:#fff;">Conteúdo da Pesquisa</div>
<div class="a" style="left:764.7px;top:570.3px;width:146px;height:29px;background:#ffff00;border-radius:5px;"></div>
<div class="t" id="loc" style="transform:scaleX(0.930);left:769.5px;top:580.6px;font-family:'DejaVu Sans','Liberation Sans',sans-serif;font-weight:bold;font-size:11.6px;color:#66662a;">LOCALIZAR</div>
<div class="t" style="transform:scaleX(0.940);left:914.3px;top:557.7px;font-family:'DejaVu Sans','Liberation Sans',sans-serif;font-weight:bold;font-size:9.4px;color:#fff;">Quant.(*)</div>
<div class="a" style="left:914.3px;top:570.3px;width:77.2px;height:29px;background:#fffbf0;border-radius:5px;"></div>
<div class="t" style="transform:scaleX(0.886);left:917.7px;top:580px;font-family:'DejaVu Sans','Liberation Sans',sans-serif;font-weight:bold;font-size:11.6px;color:#111;">1,000</div>
<div class="t" style="transform:scaleX(1.039);left:996.4px;top:557.7px;font-family:'DejaVu Sans','Liberation Sans',sans-serif;font-weight:bold;font-size:10px;color:#fff;">Total</div>
<div class="a" style="left:996.4px;top:570.3px;width:129px;height:29px;background:#fffbf0;border-radius:5px;"></div>
<div class="t" id="tot" style="transform:scaleX(0.827);left:1028.5px;top:574.6px;height:22px;line-height:22px;font-family:'DejaVu Sans','Liberation Sans',sans-serif;font-weight:bold;font-size:20px;color:#111;">R$ 159,90</div>

</body>
</html>
